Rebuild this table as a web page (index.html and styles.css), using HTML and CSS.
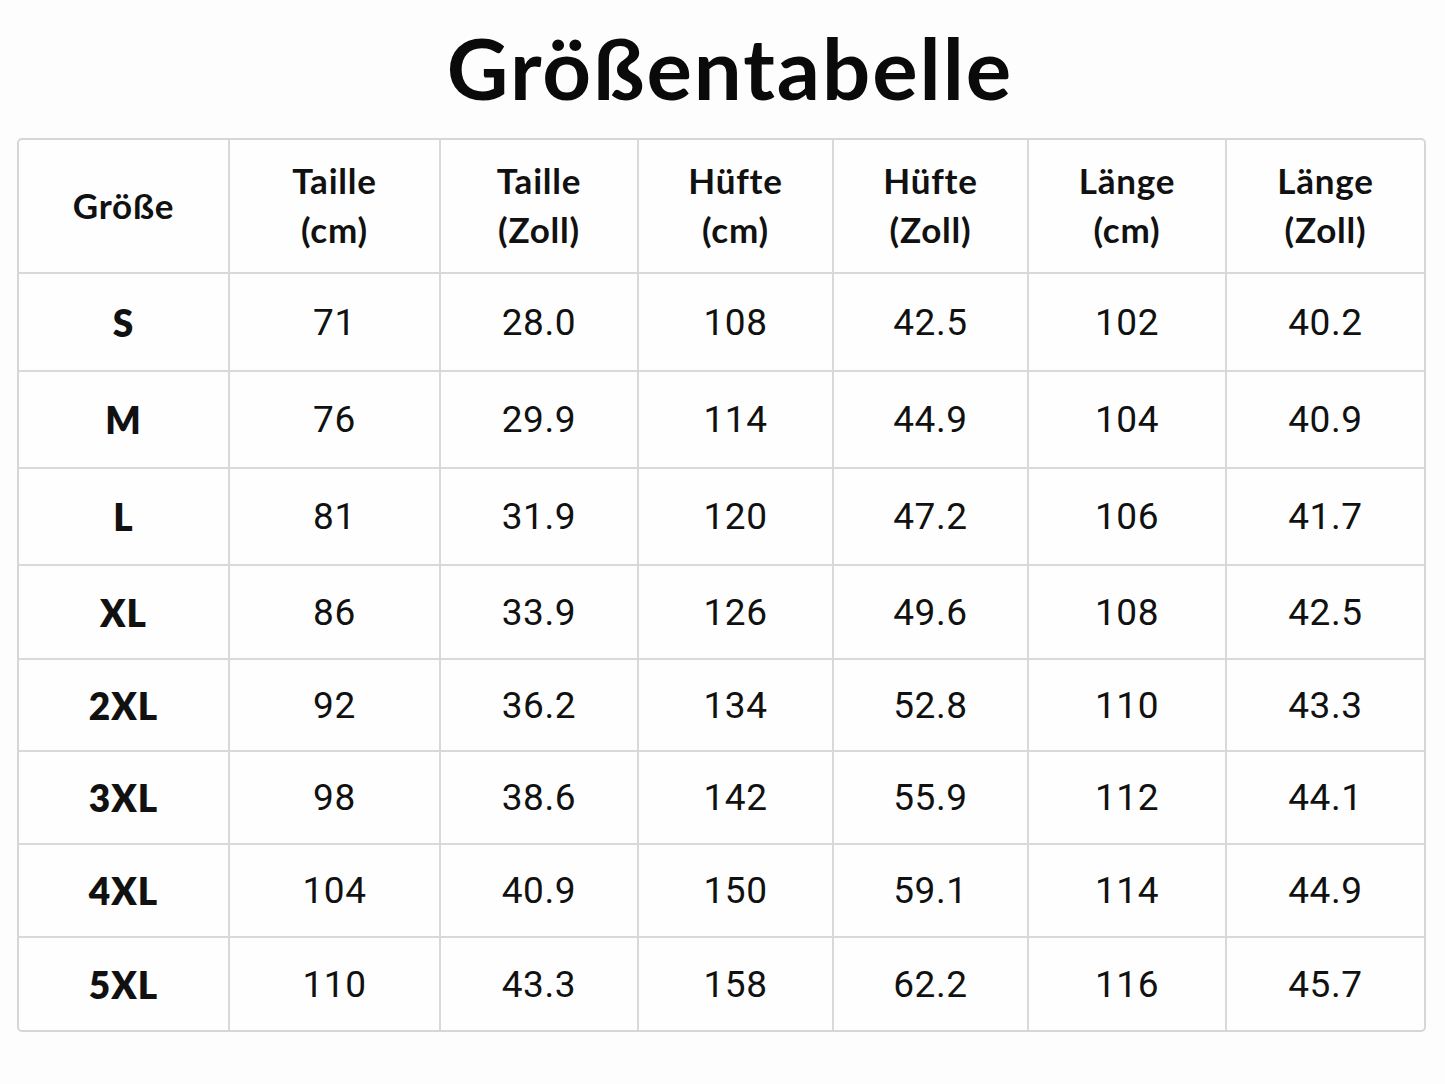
FILE: index.html
```html
<!DOCTYPE html>
<html lang="de">
<head>
<meta charset="utf-8">
<title>Größentabelle</title>
<link rel="stylesheet" href="styles.css">
</head>
<body>
<main class="page">
  <h1 class="title">Größentabelle</h1>
  <table class="chart">
    <colgroup>
      <col class="c1"><col class="c2"><col class="c3"><col class="c4"><col class="c5"><col class="c6"><col class="c7">
    </colgroup>
    <thead>
      <tr>
        <th>Größe</th>
        <th>Taille<br>(cm)</th>
        <th>Taille<br>(Zoll)</th>
        <th>Hüfte<br>(cm)</th>
        <th>Hüfte<br>(Zoll)</th>
        <th>Länge<br>(cm)</th>
        <th>Länge<br>(Zoll)</th>
      </tr>
    </thead>
    <tbody>
      <tr><th>S</th><td>71</td><td>28.0</td><td>108</td><td>42.5</td><td>102</td><td>40.2</td></tr>
      <tr><th>M</th><td>76</td><td>29.9</td><td>114</td><td>44.9</td><td>104</td><td>40.9</td></tr>
      <tr><th>L</th><td>81</td><td>31.9</td><td>120</td><td>47.2</td><td>106</td><td>41.7</td></tr>
      <tr><th>XL</th><td>86</td><td>33.9</td><td>126</td><td>49.6</td><td>108</td><td>42.5</td></tr>
      <tr><th>2XL</th><td>92</td><td>36.2</td><td>134</td><td>52.8</td><td>110</td><td>43.3</td></tr>
      <tr><th>3XL</th><td>98</td><td>38.6</td><td>142</td><td>55.9</td><td>112</td><td>44.1</td></tr>
      <tr><th>4XL</th><td>104</td><td>40.9</td><td>150</td><td>59.1</td><td>114</td><td>44.9</td></tr>
      <tr><th>5XL</th><td>110</td><td>43.3</td><td>158</td><td>62.2</td><td>116</td><td>45.7</td></tr>
    </tbody>
  </table>
</main>
</body>
</html>
```

FILE: styles.css
```css
html, body {
  margin: 0;
  padding: 0;
  background: #fdfdfd;
}

.page {
  width: 1445px;
  height: 1084px;
  padding: 18px 19px 0 17px;
  box-sizing: border-box;
  display: flex;
  flex-direction: column;
  align-items: stretch;
}

.title {
  margin: 0;
  height: 120px;
  padding-left: 17px;
  line-height: 98px;
  text-align: center;
  font-family: Lato, "Noto Sans", sans-serif;
  font-weight: 700;
  font-size: 85px;
  color: #0a0a0a;
  letter-spacing: 2px;
}

.chart {
  width: 1408px;
  border-collapse: separate;
  border-spacing: 0;
  table-layout: fixed;
  border: 2px solid #d6d6d6;
  border-radius: 5px;
  background: #fefefe;
  color: #111;
}

.c1 { width: 211px; }
.c2 { width: 211px; }
.c3 { width: 198px; }
.c4 { width: 195px; }
.c5 { width: 195px; }
.c6 { width: 198px; }
.c7 { width: 197px; }

.chart th,
.chart td {
  padding: 0;
  text-align: center;
  vertical-align: middle;
  border-right: 2px solid #d9d9d9;
  border-bottom: 2px solid #d9d9d9;
}

.chart tr > :last-child { border-right: none; }
.chart tbody tr:last-child > * { border-bottom: none; }

.chart thead th {
  height: 130px;
  font-family: Lato, "Noto Sans", sans-serif;
  font-weight: 700;
  font-size: 35px;
  line-height: 49px;
  letter-spacing: 0.8px;
  padding-bottom: 2px;
}

.chart tbody th {
  font-family: Lato, "Noto Sans", sans-serif;
  font-weight: 800;
  font-size: 37px;
  letter-spacing: 1px;
}

.chart tbody td {
  font-family: Roboto, "Noto Sans", sans-serif;
  font-weight: 400;
  font-size: 37px;
  letter-spacing: 0.6px;
}

.chart tbody tr:nth-child(1) > * { height: 96px; }
.chart tbody tr:nth-child(2) > * { height: 95px; }
.chart tbody tr:nth-child(3) > * { height: 95px; }
.chart tbody tr:nth-child(4) > * { height: 92px; }
.chart tbody tr:nth-child(5) > * { height: 90px; }
.chart tbody tr:nth-child(6) > * { height: 91px; }
.chart tbody tr:nth-child(7) > * { height: 91px; }
.chart tbody tr:nth-child(8) > * { height: 92px; }
```
